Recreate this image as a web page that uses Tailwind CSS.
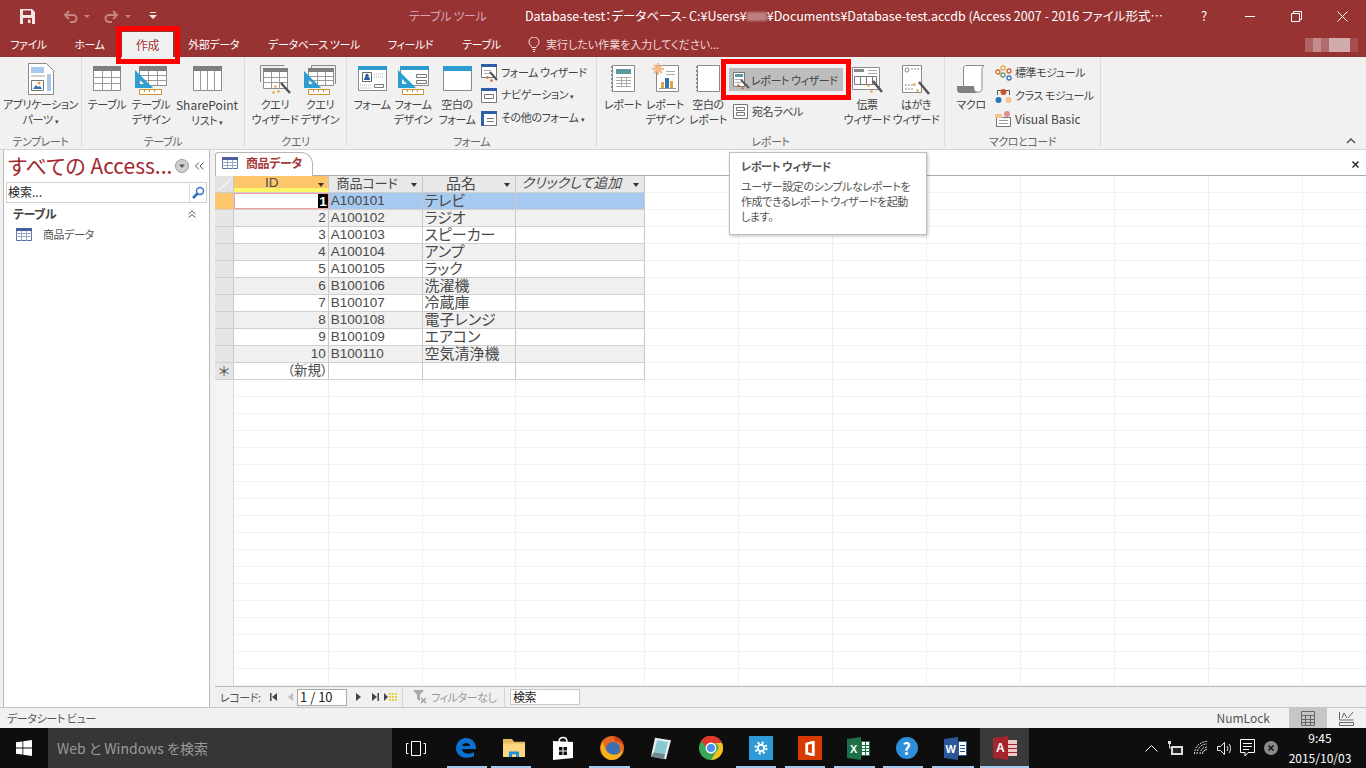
<!DOCTYPE html>
<html lang="ja">
  <head>
    <meta charset="UTF-8" />
    <title>Database-test</title>
    <script src="https://cdn.jsdelivr.net/npm/@tailwindcss/browser@4"></script>
  </head>
  <body class="relative w-[1366px] h-[768px] overflow-hidden bg-[#f1f1f1] text-[11px] tracking-[-0.4px] text-[#444] [font-feature-settings:'palt'] font-['Noto_Sans_CJK_JP','Noto_Sans',sans-serif]">

    <!-- Title bar -->
    <div class="flex items-center h-[32px] bg-[#983334] text-white">
      <div class="flex items-center w-[409px] pl-[20px]">
        <svg width="15" height="15" viewBox="0 0 15 15"><path fill="#f4e6e6" d="M0 0h12l3 3v12H0z"/><path fill="#983334" d="M3 1.500h8v4.500H3zM3 9h9v6H3z"/><path fill="#f4e6e6" d="M8 10.500h2.500V14H8z"/></svg>
        <svg class="ml-[28px]" width="15" height="13" viewBox="0 0 15 13" fill="none" stroke="#c88383" stroke-width="2"><path d="M6 1 2 5l4 4M2 5h8a3.500 3.500 0 0 1 0 7H7"/></svg>
        <span class="ml-[6px] w-0 h-0 border-x-[3px] border-x-transparent border-t-[3px] border-t-[#c88383]"></span>
        <svg class="ml-[14px]" width="15" height="13" viewBox="0 0 15 13" fill="none" stroke="#c88383" stroke-width="2"><path d="m9 1 4 4-4 4M13 5H5a3.500 3.500 0 0 0 0 7h3"/></svg>
        <span class="ml-[6px] w-0 h-0 border-x-[3px] border-x-transparent border-t-[3px] border-t-[#c88383]"></span>
        <svg class="ml-[18px]" width="8" height="8" viewBox="0 0 8 8" fill="#f4e6e6"><path d="M1 0h6v1H1zM0 3h8L4 7z"/></svg>
      </div>
      <div class="w-[116px] text-[#d8a3b8] text-[12px]">テーブル ツール</div>
      <div class="flex items-center w-[666px] whitespace-nowrap text-[12.5px] tracking-normal">Database-test：データベース- C:¥Users¥<span class="inline-block w-[20px] h-[9px] bg-[#bd7f7f] blur-[1px]"></span>¥Documents¥Database-test.accdb (Access 2007 - 2016 ファイル形式…</div>
      <div class="w-[26px] text-center text-[13px]">?</div>
      <div class="flex items-center justify-center w-[46px] ml-[10px]"><span class="w-[10px] h-px bg-white"></span></div>
      <div class="flex items-center justify-center w-[46px]">
        <svg width="11" height="11" viewBox="0 0 11 11" fill="none" stroke="#fff"><path d="M.5 2.500h8v8h-8zM2.500 2.500v-2h8v8h-2"/></svg>
      </div>
      <div class="flex items-center justify-center w-[46px]">
        <svg width="11" height="11" viewBox="0 0 11 11" stroke="#fff"><path d="m.5.500 10 10M10.500.500l-10 10"/></svg>
      </div>
    </div>

    <!-- Ribbon tabs -->
    <div class="flex items-center h-[25px] bg-[#983334] text-white">
      <div class="w-[57px] text-center">ファイル</div>
      <div class="w-[65px] text-center">ホーム</div>
      <div class="flex items-center justify-center w-[51px] h-[25px] bg-[#f1f1f1] text-[#a4373a] text-[12px]">作成</div>
      <div class="w-[81px] text-center">外部データ</div>
      <div class="w-[120px] text-center">データベース ツール</div>
      <div class="w-[73px] text-center">フィールド</div>
      <div class="w-[69px] text-center">テーブル</div>
      <div class="flex items-center ml-[12px] text-[#f0dcdc] tracking-normal">
        <svg width="12" height="15" viewBox="0 0 12 15" fill="none" stroke="#f4e6e6"><path d="M4 10.500C3.500 8.500 1 8 1 5a5 5 0 0 1 10 0c0 3-2.500 3.500-3 5.500zM4.500 12.500h3M5 14.500h2"/></svg>
        <span class="ml-[6px]">実行したい作業を入力してください...</span>
      </div>
      <div class="flex ml-auto mr-[8px] h-[14px] w-[53px]">
        <span class="w-[8px] bg-[#b16465]"></span><span class="w-[8px] bg-[#c28c8c]"></span><span class="w-[8px] bg-[#b36a6b]"></span><span class="w-[21px] bg-[#d2acac]"></span><span class="w-[8px] bg-[#a84c4d]"></span>
      </div>
    </div>

    <!-- Ribbon -->
    <div class="relative flex h-[93px] bg-[#f1f1f1] border-b border-[#d4d4d4] leading-[15px]">

      <!-- テンプレート -->
      <div class="flex flex-col shrink-0 w-[82px] pt-[6px] border-r border-[#dcdcdc] mb-[3px]">
        <div class="flex flex-1 min-h-0">
          <div class="flex flex-col items-center shrink-0 w-[81px]">
            <div class="flex justify-center h-[34px]"><svg width="26" height="32" viewBox="0 0 26 32"><path fill="#fff" stroke="#8a8a8a" d="M.5.500h18l7 7v24H.5z"/><path fill="#a9c9ec" d="M3 4h13v6H3zM19 11h4v17h-4z"/><path fill="#cfcfcf" d="M3 12h14v2H3z"/><path fill="#fff" stroke="#777" d="M3.500 17.500h12v10h-12z"/><path fill="#2e75b6" d="m5 26 3-4 2 2 2-1 2 3z"/><circle cx="11" cy="20" r="1.500" fill="#e9a23b"/></svg></div>
            <div class="text-center whitespace-nowrap">アプリケーション<br />パーツ <span class="text-[7px] align-middle">▾</span></div>
          </div>
        </div>
        <div class="text-center h-[10px] leading-[10px] text-[#666]">テンプレート</div>
      </div>

      <!-- テーブル -->
      <div class="flex flex-col shrink-0 w-[163px] pt-[6px] border-r border-[#dcdcdc] mb-[3px]">
        <div class="flex flex-1 min-h-0 pl-[3px]">
          <div class="flex flex-col items-center shrink-0 w-[44px]">
            <div class="flex justify-center h-[34px] pt-[3px]"><svg width="28" height="25" viewBox="0 0 28 25"><path fill="#fff" stroke="#8a8a8a" d="M.5.500h27v24H.5z"/><path fill="#7f7f7f" d="M0 0h28v5H0z"/><path stroke="#9a9a9a" d="M0 11.500h28M0 17.500h28M9.500 5v20M18.500 5v20"/></svg></div>
            <div class="text-center whitespace-nowrap">テーブル</div>
          </div>
          <div class="flex flex-col items-center shrink-0 w-[44px]">
            <div class="flex justify-center h-[34px] pt-[3px]"><svg width="32" height="29" viewBox="0 0 32 29"><path fill="#fff" stroke="#8a8a8a" d="M4.500.500h27v19h-27z"/><path fill="#7f7f7f" d="M4 0h28v5H4z"/><path stroke="#9a9a9a" d="M4 9.500h28M4 14.500h28M13.500 5v15M22.500 5v15"/><path fill="#2a9fd6" d="M0 4v18h18zM4 13v5h5z" fill-rule="evenodd"/><path fill="#fff" stroke="#c9952e" d="M4.500 23.500h22v5h-22z"/><path stroke="#c9952e" d="M9.500 24v2M14.500 24v2M19.500 24v2"/></svg></div>
            <div class="text-center whitespace-nowrap">テーブル<br />デザイン</div>
          </div>
          <div class="flex flex-col items-center shrink-0 w-[68px]">
            <div class="flex justify-center h-[34px] pt-[3px]"><svg width="29" height="25" viewBox="0 0 29 25"><path fill="#fff" stroke="#8a8a8a" d="M.5.500h28v24H.5z"/><path fill="#7f7f7f" d="M0 0h29v5H0z"/><path stroke="#9a9a9a" d="M7.500 5v20M14.500 5v20M21.500 5v20"/></svg></div>
            <div class="text-center whitespace-nowrap"><span class="text-[12px] tracking-normal">SharePoint</span><br />リスト <span class="text-[7px] align-middle">▾</span></div>
          </div>
        </div>
        <div class="text-center h-[10px] leading-[10px] text-[#666]">テーブル</div>
      </div>

      <!-- クエリ -->
      <div class="flex flex-col shrink-0 w-[102px] pt-[6px] border-r border-[#dcdcdc] mb-[3px]">
        <div class="flex flex-1 min-h-0 pl-[3px]">
          <div class="flex flex-col items-center shrink-0 w-[54px]">
            <div class="flex justify-center h-[34px] pt-[2px]"><svg width="31" height="30" viewBox="0 0 31 30"><path fill="none" stroke="#8a8a8a" d="M.5 17V.500h24"/><path fill="#fff" stroke="#8a8a8a" d="M3.500 3.500h24v20h-24z"/><path fill="#7f7f7f" d="M3 3h25v4H3z"/><path stroke="#9a9a9a" d="M3 12.500h25M3 17.500h25M11.500 7v17M19.500 7v17"/><path stroke="#555" stroke-width="2.500" d="m21 18 9 10"/><path fill="#e0a83a" d="m15 20 2 1-1 2-2-1zM18 25l2 1-1 2-2-1zM13 26l2 1-1 2-2-1z"/></svg></div>
            <div class="text-center whitespace-nowrap">クエリ<br />ウィザード</div>
          </div>
          <div class="flex flex-col items-center shrink-0 w-[36px]">
            <div class="flex justify-center h-[34px] pt-[2px]"><svg class="shrink-0" width="32" height="30" viewBox="0 0 32 30"><path fill="none" stroke="#8a8a8a" d="M7.500 3V.500h24V19"/><path fill="#fff" stroke="#8a8a8a" d="M4.500 3.500h25v17h-25z"/><path fill="#7f7f7f" d="M4 3h26v4H4z"/><path stroke="#9a9a9a" d="M4 11.500h26M4 15.500h26M13.500 7v13M21.500 7v13"/><path fill="#2a9fd6" d="M0 6v17h17zM4 14v5h5z" fill-rule="evenodd"/><path fill="#fff" stroke="#c9952e" d="M4.500 24.500h21v5h-21z"/><path stroke="#c9952e" d="M9.500 25v2M14.500 25v2M19.500 25v2"/></svg></div>
            <div class="text-center whitespace-nowrap">クエリ<br />デザイン</div>
          </div>
        </div>
        <div class="text-center h-[10px] leading-[10px] text-[#666]">クエリ</div>
      </div>

      <!-- フォーム -->
      <div class="flex flex-col shrink-0 w-[250px] pt-[6px] border-r border-[#dcdcdc] mb-[3px]">
        <div class="flex flex-1 min-h-0 pl-[7px]">
          <div class="flex flex-col items-center shrink-0 w-[36px]">
            <div class="flex justify-center h-[34px] pt-[3px]"><svg class="shrink-0" width="29" height="25" viewBox="0 0 29 25"><path fill="#fff" stroke="#8a8a8a" d="M.5.500h28v24H.5z"/><path fill="#2e9bcf" d="M0 0h29v4H0z"/><path fill="#fff" stroke="#666" d="M4.500 6.500h9v9h-9z"/><circle cx="9" cy="9.500" r="1.800" fill="#2e5fa8"/><path fill="#2e5fa8" d="M6 14c0-5 6-5 6 0z"/><path stroke="#aaa" stroke-dasharray="1 1" d="M16 8h10M16 11h10M2 19h12M2 22h12"/><path fill="#fff" stroke="#777" d="M16.500 18.500h9v3h-9z"/></svg></div>
            <div class="text-center whitespace-nowrap">フォーム</div>
          </div>
          <div class="flex flex-col items-center shrink-0 w-[46px]">
            <div class="flex justify-center h-[34px] pt-[3px]"><svg class="shrink-0" width="31" height="29" viewBox="0 0 31 29"><path fill="#fff" stroke="#8a8a8a" d="M2.500.500h28v19h-28z"/><path fill="#2e9bcf" d="M2 0h29v4H2z"/><path fill="#fff" stroke="#777" d="M18.500 8.500h10v3h-10zM18.500 14.500h10v3h-10z"/><path fill="#2a9fd6" d="M0 4v18h18zM4 13v5h5z" fill-rule="evenodd"/><path fill="#fff" stroke="#c9952e" d="M4.500 23.500h21v5h-21z"/><path stroke="#c9952e" d="M9.500 24v2M14.500 24v2M19.500 24v2"/></svg></div>
            <div class="text-center whitespace-nowrap">フォーム<br />デザイン</div>
          </div>
          <div class="flex flex-col items-center shrink-0 w-[42px]">
            <div class="flex justify-center h-[34px] pt-[3px]"><svg class="shrink-0" width="29" height="25" viewBox="0 0 29 25"><path fill="#fff" stroke="#8a8a8a" d="M.5.500h28v24H.5z"/><path fill="#2e9bcf" d="M0 0h29v5H0z"/></svg></div>
            <div class="text-center whitespace-nowrap">空白の<br />フォーム</div>
          </div>
          <div class="flex flex-col pl-[3px]">
            <div class="flex items-center h-[23px] -mt-[2px]">
              <svg class="shrink-0" width="18" height="18" viewBox="0 0 18 18"><path fill="#fff" stroke="#777" d="M.5.500h15v13H.5z"/><path fill="#2e5fa8" d="M0 0h16v3H0z"/><path stroke="#aaa" d="M3 6.500h7M3 9.500h7"/><path stroke="#555" stroke-width="2" d="m9 8 7 8"/><path fill="#d9602b" d="m6 12 2 1-1 2-2-1zM10 15l2 1-1 2-2-1z"/></svg>
              <span class="ml-[2px] whitespace-nowrap">フォーム ウィザード</span>
            </div>
            <div class="flex items-center h-[23px]">
              <svg class="shrink-0" width="16" height="15" viewBox="0 0 16 15"><path fill="#fff" stroke="#777" d="M.5.500h15v14H.5z"/><path fill="#2e5fa8" d="M0 0h16v3H0z"/><path fill="none" stroke="#777" d="M3.500 6.500h9v4h-9z"/></svg>
              <span class="ml-[4px] whitespace-nowrap">ナビゲーション <span class="text-[7px] align-middle">▾</span></span>
            </div>
            <div class="flex items-center h-[23px]">
              <svg class="shrink-0" width="16" height="15" viewBox="0 0 16 15"><path fill="#fff" stroke="#777" d="M.5.500h15v14H.5z"/><path fill="#2e5fa8" d="M0 0h16v3H0zM0 3h3v12H0z"/><path stroke="#777" d="M6 7.500h7M6 10.500h7"/></svg>
              <span class="ml-[4px] whitespace-nowrap">その他のフォーム <span class="text-[7px] align-middle">▾</span></span>
            </div>
          </div>
        </div>
        <div class="text-center h-[10px] leading-[10px] text-[#666]">フォーム</div>
      </div>

      <!-- レポート -->
      <div class="flex flex-col shrink-0 w-[348px] pt-[6px] border-r border-[#dcdcdc] mb-[3px]">
        <div class="flex flex-1 min-h-0 pl-[7px]">
          <div class="flex flex-col items-center shrink-0 w-[38px]">
            <div class="flex justify-center h-[34px] pt-[2px]"><svg width="24" height="27" viewBox="0 0 24 27"><path fill="#fff" stroke="#8a8a8a" d="M1.500.500h22v26h-22z"/><path stroke="#8a8a8a" stroke-dasharray="2 2" d="M.5 1v25"/><path fill="#5f9a9a" d="M5 4h15v5H5z"/><path stroke="#aaa" d="M5 12.500h15M5 15.500h15M5 18.500h15M5 21.500h15M10.500 12v10M15.500 12v10"/></svg></div>
            <div class="text-center whitespace-nowrap">レポート</div>
          </div>
          <div class="flex flex-col items-center shrink-0 w-[46px]">
            <div class="flex justify-center h-[34px]"><svg width="28" height="29" viewBox="0 0 28 29"><path fill="#fff" stroke="#8a8a8a" d="M5.500 2.500h22v26h-22z"/><path stroke="#f3b989" stroke-width="2" d="M7 0v12M1 6h12M3 2l8 8M11 2l-8 8"/><path stroke="#aaa" d="M15 8.500h9M15 11.500h9"/><path fill="#e9a23b" d="M10 19h3v6h-3zM19 18h3v7h-3z"/><path fill="#2e75b6" d="M14 15h4v10h-4z"/><path stroke="#999" d="M8 25.500h17"/></svg></div>
            <div class="text-center whitespace-nowrap">レポート<br />デザイン</div>
          </div>
          <div class="flex flex-col items-center shrink-0 w-[40px]">
            <div class="flex justify-center h-[34px] pt-[2px]"><svg width="24" height="27" viewBox="0 0 24 27"><path fill="#fff" stroke="#8a8a8a" d="M1.500.500h22v26h-22z"/><path stroke="#8a8a8a" stroke-dasharray="2 2" d="M.5 1v25"/></svg></div>
            <div class="text-center whitespace-nowrap">空白の<br />レポート</div>
          </div>
          <div class="flex flex-col shrink-0 w-[114px]">
            <div class="flex items-center w-[114px] h-[23px] ml-[1px] mt-[5px] pt-[2px] pl-[4px] bg-[#bdbdbd]">
              <svg class="shrink-0" width="17" height="17" viewBox="0 0 17 17"><path fill="#fff" stroke="#777" d="M.5.500h11v14H.5z"/><path fill="#5f9a9a" d="M2 2h8v3H2z"/><path stroke="#aaa" d="M2 7.500h8M2 10.500h6"/><path stroke="#555" stroke-width="2" d="m8 8 8 8"/><path fill="#d9602b" d="m5 12 2 1-1 2-2-1zM9 15l2 1-1 2-2-1z"/></svg>
              <span class="ml-[1px] whitespace-nowrap">レポート ウィザード</span>
            </div>
            <div class="flex items-center h-[23px] pl-[5px] mt-[9px]">
              <svg class="shrink-0" width="15" height="15" viewBox="0 0 15 15" fill="#fff" stroke="#777"><path d="M.5.500h14v14H.5z"/><path d="M3.500 3.500h8v3h-8zM3.500 8.500h8v3h-8z"/></svg>
              <span class="ml-[4px] whitespace-nowrap">宛名ラベル</span>
            </div>
          </div>
          <div class="flex flex-col items-center shrink-0 w-[50px]">
            <div class="flex justify-center h-[34px] pt-[4px]"><svg class="shrink-0" width="31" height="27" viewBox="0 0 31 27"><path fill="#fff" stroke="#8a8a8a" d="M.5.500h27v22H.5z"/><path fill="#888" d="M2 2h10v3H2z"/><path stroke="#aaa" d="M16 3.500h9M16 6.500h9"/><path fill="none" stroke="#777" d="M2.500 9.500h22v8h-22zM8.500 9.500v8M14.500 9.500v8M20.500 9.500v8"/><path stroke="#555" stroke-width="2.500" d="m21 14 9 11"/><path fill="#e0a83a" d="m16 17 2 1-1 2-2-1zM19 23l2 1-1 2-2-1z"/></svg></div>
            <div class="text-center whitespace-nowrap">伝票<br />ウィザード</div>
          </div>
          <div class="flex flex-col items-center shrink-0 w-[48px]">
            <div class="flex justify-center h-[34px] pt-[2px]"><svg width="28" height="30" viewBox="0 0 28 30"><path fill="#fff" stroke="#8a8a8a" d="M.5.500h19v27H.5z"/><circle cx="5" cy="5" r="2" fill="none" stroke="#888"/><path stroke="#888" stroke-dasharray="2 1" d="M9 4h8M3 20h8M3 24h8"/><path stroke="#555" stroke-width="2.500" d="m17 17 10 12"/><path fill="#e0a83a" d="m12 18 2 1-1 2-2-1zM15 24l2 1-1 2-2-1z"/></svg></div>
            <div class="text-center whitespace-nowrap">はがき<br />ウィザード</div>
          </div>
        </div>
        <div class="text-center h-[10px] leading-[10px] text-[#666]">レポート</div>
      </div>

      <!-- マクロとコード -->
      <div class="flex flex-col shrink-0 w-[156px] pt-[6px] border-r border-[#dcdcdc] mb-[3px]">
        <div class="flex flex-1 min-h-0 pl-[5px]">
          <div class="flex flex-col items-center shrink-0 w-[42px]">
            <div class="flex justify-center h-[34px] pt-[2px]"><svg width="28" height="28" viewBox="0 0 28 28"><path fill="#fff" stroke="#8a8a8a" d="M6.500 3C6.500 1 8 .500 10 .500h17c-2 1-2 3-2 5v18c0 2-1 3.500-3 3.500H6.500z"/><path fill="#7f7f7f" d="M0 21h17c0 3 1 6 3 7H3c-2 0-3-2-3-4z"/></svg></div>
            <div class="text-center whitespace-nowrap">マクロ</div>
          </div>
          <div class="flex flex-col pl-[3px]">
            <div class="flex items-center h-[23px] -mt-[2px] whitespace-nowrap">
              <svg class="shrink-0" width="17" height="16" viewBox="0 0 17 16" fill="#fff" stroke-width="1.300"><circle cx="3" cy="7" r="2" stroke="#d9602b"/><circle cx="8" cy="3" r="2" stroke="#e0a83a"/><circle cx="14" cy="6" r="2" stroke="#d9602b"/><circle cx="8" cy="10" r="2" stroke="#5f9a6a"/><circle cx="14" cy="13" r="2" stroke="#2e75b6"/></svg>
              <span class="ml-[3px]">標準モジュール</span>
            </div>
            <div class="flex items-center h-[23px] whitespace-nowrap">
              <svg class="shrink-0" width="17" height="16" viewBox="0 0 17 16"><path fill="none" stroke="#555" d="M2.500 7V2.500h12V7"/><circle cx="8.500" cy="4" r="3" fill="#c9562b"/><circle cx="3.500" cy="12" r="3" fill="#2e75b6"/><circle cx="13.500" cy="12" r="3" fill="#f2c48f"/></svg>
              <span class="ml-[3px]">クラス モジュール</span>
            </div>
            <div class="flex items-center h-[23px] whitespace-nowrap">
              <svg class="shrink-0" width="17" height="16" viewBox="0 0 17 16"><path fill="#fff" stroke="#777" d="M1.500 6.500h14v9h-14z"/><path stroke="#999" d="M4 9.500h9M4 12.500h9"/><path fill="#f2c48f" d="M0 3h7v4H0z"/><circle cx="12" cy="3" r="3" fill="#e58c8c"/></svg>
              <span class="ml-[3px] text-[12px] tracking-normal">Visual Basic</span>
            </div>
          </div>
        </div>
        <div class="text-center h-[10px] leading-[10px] text-[#666]">マクロとコード</div>
      </div>

      <div class="flex flex-1 items-end justify-end pb-[5px] pr-[10px]">
        <svg width="10" height="6" viewBox="0 0 10 6" fill="none" stroke="#555" stroke-width="1.500"><path d="m1 5 4-4 4 4"/></svg>
      </div>
    </div>

    <!-- Main -->
    <div class="flex h-[557px] bg-[#f1f1f1]">

      <!-- Navigation pane -->
      <div class="flex flex-col w-[207px] ml-[3px] bg-white border-x border-[#b9b9b9]">
        <div class="flex items-center h-[32px] pl-[4px]">
          <span class="w-[165px] text-[21px] tracking-normal text-[#a4262c] whitespace-nowrap">すべての Access...</span>
          <svg class="ml-[2px]" width="14" height="14" viewBox="0 0 14 14"><circle cx="7" cy="7" r="6.500" fill="#d0d0d0" stroke="#999"/><path fill="#555" d="M4 5.500h6L7 9z"/></svg>
          <svg class="ml-[6px]" width="9" height="8" viewBox="0 0 9 8" fill="none" stroke="#555"><path d="M4 .500.500 4 4 7.500M8.500.500 5 4l3.500 3.500"/></svg>
        </div>
        <div class="flex items-center h-[21px] mx-[2px] border border-[#cfcfcf]">
          <span class="flex-1 pl-[1px] pb-[2px] text-[12px] tracking-normal text-[#222]">検索...</span>
          <span class="flex items-center justify-center w-[17px] h-full border-l border-[#dcdcdc]">
            <svg width="13" height="13" viewBox="0 0 13 13" fill="none" stroke="#2e6fc2"><circle cx="8" cy="5" r="3.500" stroke-width="1.500"/><path stroke-width="2.500" d="M5.500 7.500 1 12"/></svg>
          </span>
        </div>
        <div class="flex items-center justify-between h-[22px] pl-[9px] pr-[13px] text-[12px] font-bold text-[#444]">
          <span>テーブル</span>
          <svg width="8" height="8" viewBox="0 0 8 8" fill="none" stroke="#555"><path d="m.5 4 3.500-3 3.500 3M.5 7.500 4 4.500l3.500 3"/></svg>
        </div>
        <div class="flex items-center h-[19px] pl-[12px]">
          <svg width="16" height="13" viewBox="0 0 16 13"><path fill="#fff" stroke="#5a6ea8" d="M.5.500h15v12H.5z"/><path fill="#4a5f9e" d="M0 0h16v3H0z"/><path stroke="#9aa8cc" d="M0 5.500h16M0 8.500h16M5.500 3v10M10.500 3v10"/></svg>
          <span class="ml-[11px] text-[#555]">商品データ</span>
        </div>
      </div>

      <!-- Document -->
      <div class="flex flex-col flex-1 min-w-0 ml-[5px] bg-white">
        <!-- Tab strip -->
        <div class="flex items-end justify-between h-[26px] border-b border-[#adadad] bg-white">
          <div class="relative flex items-center w-[98px] h-[24px] -mb-px pl-[6px] pb-[3px] bg-white border border-b-0 border-[#b5b5b5] rounded-tl-[3px] rounded-tr-[12px]">
            <svg width="16" height="12" viewBox="0 0 16 12"><path fill="#fff" stroke="#5a6ea8" d="M.5.500h15v11H.5z"/><path fill="#4a5f9e" d="M0 0h16v3H0z"/><path stroke="#9aa8cc" d="M0 5.500h16M0 8.500h16M5.500 3v9M10.500 3v9"/></svg>
            <span class="ml-[8px] font-bold text-[12px] text-[#a4373a] whitespace-nowrap">商品データ</span>
          </div>
          <svg class="mb-[7px] mr-[7px]" width="7" height="7" viewBox="0 0 7 7" stroke="#222" stroke-width="1.400"><path d="m.5.500 6 6M6.500.500l-6 6"/></svg>
        </div>

        <!-- Datasheet -->
        <div class="flex flex-1 min-h-0 text-[13.5px] tracking-normal text-[#4a4a4a] leading-[15px] font-['Liberation_Sans','Noto_Sans_CJK_JP',sans-serif]">
          <div class="flex flex-col w-[430px]">
            <!-- Header -->
            <div class="flex h-[17px] bg-[#e8e8e8] border-b border-[#cfcfcf]">
              <div class="flex items-end justify-end w-[19px] pr-[1px] pb-[1px] bg-[#e3e3e3] border-r border-[#c8c8c8]">
                <svg width="14" height="13" viewBox="0 0 14 13"><path stroke="#fff" d="M1 12 13 1"/></svg>
              </div>
              <div class="relative flex items-center justify-center w-[95px] pr-[18px] bg-[#fdc66b] border-r border-[#c8c8c8] border-b-[4px] border-b-[#fbf768]">
                ID
                <span class="absolute right-[4px] top-[7px] w-0 h-0 border-x-[3.500px] border-x-transparent border-t-[4px] border-t-[#333]"></span>
              </div>
              <div class="relative flex items-center justify-center w-[94px] pr-[16px] pb-[1px] text-[13px] border-r border-[#c8c8c8]">
                商品コード
                <span class="absolute right-[5px] top-[7px] w-0 h-0 border-x-[3.500px] border-x-transparent border-t-[4px] border-t-[#333]"></span>
              </div>
              <div class="relative flex items-center justify-center w-[94px] pr-[16px] pb-[1px] text-[15px] border-r border-[#c8c8c8]">
                品名
                <span class="absolute right-[5px] top-[7px] w-0 h-0 border-x-[3.500px] border-x-transparent border-t-[4px] border-t-[#333]"></span>
              </div>
              <div class="relative flex items-center w-[129px] pl-[5px] pb-[1px] text-[14px] italic border-r border-[#c8c8c8] whitespace-nowrap">
                クリックして追加
                <span class="absolute right-[5px] top-[7px] w-0 h-0 border-x-[3.500px] border-x-transparent border-t-[4px] border-t-[#333]"></span>
              </div>
            </div>

            <!-- Rows -->
            <div class="flex h-[17px] bg-white border-b border-[#cfcfcf]">
              <div class="w-[19px] bg-[#fdc66b] border-r border-[#c8c8c8]"></div>
              <div class="flex justify-end w-[95px] bg-white border border-[#fb9c9c]"><span class="bg-black text-white font-bold px-px">1</span></div>
              <div class="w-[94px] pl-[2px] bg-[#a6c9f0] border-r border-[#c8c8c8]">A100101</div>
              <div class="w-[94px] pl-[2px] bg-[#a6c9f0] border-r border-[#c8c8c8] text-[15px]">テレビ</div>
              <div class="w-[129px] bg-[#a6c9f0] border-r border-[#c8c8c8]"></div>
            </div>
            <div class="flex h-[17px] bg-[#f0f0f0] border-b border-[#cfcfcf]">
              <div class="w-[19px] bg-[#e6e6e6] border-r border-[#c8c8c8]"></div>
              <div class="w-[95px] pr-[2px] text-right border-r border-[#c8c8c8]">2</div>
              <div class="w-[94px] pl-[2px] border-r border-[#c8c8c8]">A100102</div>
              <div class="w-[94px] pl-[2px] border-r border-[#c8c8c8] text-[15px]">ラジオ</div>
              <div class="w-[129px] border-r border-[#c8c8c8]"></div>
            </div>
            <div class="flex h-[17px] bg-white border-b border-[#cfcfcf]">
              <div class="w-[19px] bg-[#e6e6e6] border-r border-[#c8c8c8]"></div>
              <div class="w-[95px] pr-[2px] text-right border-r border-[#c8c8c8]">3</div>
              <div class="w-[94px] pl-[2px] border-r border-[#c8c8c8]">A100103</div>
              <div class="w-[94px] pl-[2px] border-r border-[#c8c8c8] text-[15px]">スピーカー</div>
              <div class="w-[129px] border-r border-[#c8c8c8]"></div>
            </div>
            <div class="flex h-[17px] bg-[#f0f0f0] border-b border-[#cfcfcf]">
              <div class="w-[19px] bg-[#e6e6e6] border-r border-[#c8c8c8]"></div>
              <div class="w-[95px] pr-[2px] text-right border-r border-[#c8c8c8]">4</div>
              <div class="w-[94px] pl-[2px] border-r border-[#c8c8c8]">A100104</div>
              <div class="w-[94px] pl-[2px] border-r border-[#c8c8c8] text-[15px]">アンプ</div>
              <div class="w-[129px] border-r border-[#c8c8c8]"></div>
            </div>
            <div class="flex h-[17px] bg-white border-b border-[#cfcfcf]">
              <div class="w-[19px] bg-[#e6e6e6] border-r border-[#c8c8c8]"></div>
              <div class="w-[95px] pr-[2px] text-right border-r border-[#c8c8c8]">5</div>
              <div class="w-[94px] pl-[2px] border-r border-[#c8c8c8]">A100105</div>
              <div class="w-[94px] pl-[2px] border-r border-[#c8c8c8] text-[15px]">ラック</div>
              <div class="w-[129px] border-r border-[#c8c8c8]"></div>
            </div>
            <div class="flex h-[17px] bg-[#f0f0f0] border-b border-[#cfcfcf]">
              <div class="w-[19px] bg-[#e6e6e6] border-r border-[#c8c8c8]"></div>
              <div class="w-[95px] pr-[2px] text-right border-r border-[#c8c8c8]">6</div>
              <div class="w-[94px] pl-[2px] border-r border-[#c8c8c8]">B100106</div>
              <div class="w-[94px] pl-[2px] border-r border-[#c8c8c8] text-[15px]">洗濯機</div>
              <div class="w-[129px] border-r border-[#c8c8c8]"></div>
            </div>
            <div class="flex h-[17px] bg-white border-b border-[#cfcfcf]">
              <div class="w-[19px] bg-[#e6e6e6] border-r border-[#c8c8c8]"></div>
              <div class="w-[95px] pr-[2px] text-right border-r border-[#c8c8c8]">7</div>
              <div class="w-[94px] pl-[2px] border-r border-[#c8c8c8]">B100107</div>
              <div class="w-[94px] pl-[2px] border-r border-[#c8c8c8] text-[15px]">冷蔵庫</div>
              <div class="w-[129px] border-r border-[#c8c8c8]"></div>
            </div>
            <div class="flex h-[17px] bg-[#f0f0f0] border-b border-[#cfcfcf]">
              <div class="w-[19px] bg-[#e6e6e6] border-r border-[#c8c8c8]"></div>
              <div class="w-[95px] pr-[2px] text-right border-r border-[#c8c8c8]">8</div>
              <div class="w-[94px] pl-[2px] border-r border-[#c8c8c8]">B100108</div>
              <div class="w-[94px] pl-[2px] border-r border-[#c8c8c8] text-[15px]">電子レンジ</div>
              <div class="w-[129px] border-r border-[#c8c8c8]"></div>
            </div>
            <div class="flex h-[17px] bg-white border-b border-[#cfcfcf]">
              <div class="w-[19px] bg-[#e6e6e6] border-r border-[#c8c8c8]"></div>
              <div class="w-[95px] pr-[2px] text-right border-r border-[#c8c8c8]">9</div>
              <div class="w-[94px] pl-[2px] border-r border-[#c8c8c8]">B100109</div>
              <div class="w-[94px] pl-[2px] border-r border-[#c8c8c8] text-[15px]">エアコン</div>
              <div class="w-[129px] border-r border-[#c8c8c8]"></div>
            </div>
            <div class="flex h-[17px] bg-[#f0f0f0] border-b border-[#cfcfcf]">
              <div class="w-[19px] bg-[#e6e6e6] border-r border-[#c8c8c8]"></div>
              <div class="w-[95px] pr-[2px] text-right border-r border-[#c8c8c8]">10</div>
              <div class="w-[94px] pl-[2px] border-r border-[#c8c8c8]">B100110</div>
              <div class="w-[94px] pl-[2px] border-r border-[#c8c8c8] text-[15px]">空気清浄機</div>
              <div class="w-[129px] border-r border-[#c8c8c8]"></div>
            </div>
            <div class="flex h-[17px] bg-white border-b border-[#cfcfcf]">
              <div class="flex items-center justify-center w-[19px] bg-[#e6e6e6] border-r border-[#c8c8c8]">＊</div>
              <div class="w-[95px] text-right border-r border-[#c8c8c8] whitespace-nowrap">（新規）</div>
              <div class="w-[94px] border-r border-[#c8c8c8]"></div>
              <div class="w-[94px] border-r border-[#c8c8c8]"></div>
              <div class="w-[129px] border-r border-[#c8c8c8]"></div>
            </div>

            <!-- Empty grid under the rows -->
            <div class="flex flex-1 bg-[linear-gradient(to_bottom,transparent_16px,#f2f2f2_16px)] bg-[size:100%_17px]">
              <div class="w-[19px] bg-[#f4f4f4] border-r border-[#dcdcdc]"></div>
              <div class="w-[95px] border-r border-[#f0f0f0]"></div>
              <div class="w-[94px] border-r border-[#f0f0f0]"></div>
              <div class="w-[94px] border-r border-[#f0f0f0]"></div>
              <div class="w-[129px] border-r border-[#f0f0f0]"></div>
            </div>
          </div>
          <div class="flex-1 bg-[linear-gradient(to_bottom,transparent_16px,#f2f2f2_16px),linear-gradient(to_right,transparent_93px,#f0f0f0_93px)] bg-[size:100%_17px,94px_100%]"></div>
        </div>

        <!-- Record navigation -->
        <div class="flex items-center h-[21px] bg-[#f0f0f0] border-t border-[#b9b9b9] whitespace-nowrap text-[#555]">
          <span class="ml-[5px] w-[50px]">レコード:</span>
          <svg width="7" height="8" viewBox="0 0 7 8" fill="#444"><path d="M0 0h1.500v8H0zM7 0v8L2 4z"/></svg>
          <svg class="ml-[11px]" width="5" height="8" viewBox="0 0 5 8" fill="#bbb"><path d="M5 0v8L0 4z"/></svg>
          <span class="flex items-center w-[50px] h-[17px] ml-[4px] pl-[2px] bg-white border border-[#a9a9a9] text-[#222] text-[13px] tracking-normal">1 / 10</span>
          <svg class="ml-[9px]" width="5" height="8" viewBox="0 0 5 8" fill="#444"><path d="M0 0v8l5-4z"/></svg>
          <svg class="ml-[11px]" width="7" height="8" viewBox="0 0 7 8" fill="#444"><path d="M0 0v8l5-4zM5.500 0H7v8H5.500z"/></svg>
          <svg class="ml-[5px]" width="13" height="8" viewBox="0 0 13 8"><path fill="#444" d="M0 0v8l4-4z"/><path fill="#e6d13a" d="M5 0h2v2H5zM8 0h2v2H8zM11 0h2v2h-2zM5 3h2v2H5zM8 3h2v2H8zM11 3h2v2h-2zM5 6h2v2H5zM8 6h2v2H8zM11 6h2v2h-2z"/></svg>
          <span class="ml-[5px] w-px h-[20px] bg-[#d4d4d4]"></span>
          <svg class="ml-[10px]" width="15" height="14" viewBox="0 0 15 14"><path fill="#a9a9a9" d="M0 0h11L7 5v6L4 9V5z"/><path stroke="#999" stroke-width="1.300" d="m8 8 5 5M13 8l-5 5"/></svg>
          <span class="ml-[3px] w-[73px] text-[#9a9a9a]">フィルターなし</span>
          <span class="w-px h-[20px] bg-[#d4d4d4]"></span>
          <span class="flex items-center w-[70px] h-[16px] ml-[5px] pl-[2px] bg-white border border-[#c8c8c8] text-[12px] text-[#222]">検索</span>
        </div>
      </div>
    </div>

    <!-- Status bar -->
    <div class="flex items-center h-[21px] pl-[7px] bg-[#f1f1f1] border-t border-[#c6c6c6] text-[#555]">
      <span>データシート ビュー</span>
      <span class="ml-auto text-[12px] tracking-normal">NumLock</span>
      <div class="flex items-center justify-center w-[38px] h-full ml-[19px] bg-[#c6c6c6]">
        <svg width="14" height="15" viewBox="0 0 14 15" fill="none" stroke="#666"><path d="M.5.500h13v14H.5zM.5 4.500h13M.5 8.500h13M.5 11.500h13M4.500 4.500v10M9.500 4.500v10"/></svg>
      </div>
      <div class="flex items-center justify-center w-[39px] h-full">
        <svg width="15" height="15" viewBox="0 0 15 15" fill="none" stroke="#666"><path d="M.5 1v8h14M3 7l2-5 3 5M9 7l5-6"/><path d="M.5 11.500h14v3H.5z"/></svg>
      </div>
    </div>

    <!-- Taskbar -->
    <div class="flex items-center h-[40px] bg-[#0e0e0e] text-white tracking-normal">
      <div class="flex items-center justify-center w-[48px]">
        <svg width="16" height="16" viewBox="0 0 16 16" fill="#fff"><path d="m0 2.300 6.500-.9v6.200H0zM7.300 1.300 16 0v7.600H7.300zM0 8.400h6.500v6.200L0 13.700zM7.300 8.400H16V16l-8.700-1.200z"/></svg>
      </div>
      <div class="flex items-center w-[344px] h-[40px] pl-[9px] bg-[#363636] text-[#9a9a9a] text-[14px]">Web と Windows を検索</div>

      <div class="flex items-center justify-center w-[48px] h-[40px]">
        <svg width="20" height="15" viewBox="0 0 20 15" fill="none" stroke="#fff"><path d="M5.500.500h9v14h-9zM2.500 2.500H.5v10h2M17.500 2.500h2v10h-2"/></svg>
      </div>
      <div class="relative flex items-center justify-center w-[49px] h-[40px] ml-[1px]">
        <svg width="20" height="20" viewBox="0 0 20 20"><path fill="#0b72d4" d="M10 0c6 0 10 4 10 11H6c0 5 8 6 12 3v4c-5 3-17 3-18-7C0 5 4 0 10 0zM6 8h8c0-4-7-4-8 0z"/></svg>
        <span class="absolute left-[6px] bottom-0 w-[40px] h-[2px] bg-[#a3c9ee]"></span>
      </div>
      <div class="relative flex items-center justify-center w-[48px] h-[40px]">
        <svg width="22" height="18" viewBox="0 0 22 20" preserveAspectRatio="none"><path fill="#e7b960" d="M0 0h9l2 3h11v17H0z"/><path fill="#fbd77f" d="M0 5h22v15H0z"/><path fill="#1d90d8" d="M6 14h10v6h-3v-3H9v3H6z"/></svg>
        <span class="absolute left-[1px] bottom-0 w-[40px] h-[2px] bg-[#a3c9ee]"></span>
      </div>
      <div class="flex items-center justify-center w-[49px] h-[40px]">
        <svg width="20" height="24" viewBox="0 0 20 24"><path fill="none" stroke="#fff" stroke-width="1.500" d="M6 6c0-6 8-6 8 0"/><path fill="#fff" d="m0 5 20 1v16L0 24z"/><path fill="#111" d="M6 11h3.500v3.500H6zM10.500 11H14v3.500h-3.500zM6 15.500h3.500V19H6zM10.500 15.500H14V19h-3.500z"/></svg>
      </div>
      <div class="relative flex items-center justify-center w-[50px] h-[40px]">
        <svg width="24" height="24" viewBox="0 0 24 24"><circle cx="12" cy="12" r="12" fill="#e66a1f"/><circle cx="13" cy="13" r="7" fill="#3d6fb5"/><path fill="#f6b21b" d="M3 6c2 14 14 16 20 8-1 6-6 10-11 10C3 24-2 13 3 6z"/><path fill="#d8391e" d="M14 0c5 1 9 5 10 11-2-4-5-6-9-6z"/></svg>
        <span class="absolute left-[2px] bottom-0 w-[41px] h-[2px] bg-[#a3c9ee]"></span>
      </div>
      <div class="flex items-center justify-center w-[48px] h-[40px]">
        <svg width="22" height="24" viewBox="0 0 22 28" preserveAspectRatio="none"><path fill="#e8eef0" d="m5 2 16 3-5 22L1 24z"/><path fill="#8cc9cf" d="m7 5 11 2-3 14-11-2z"/><path fill="#6d8a8f" d="M4 19l11 2-1 6L1 24z"/></svg>
      </div>
      <div class="flex items-center justify-center w-[51px] h-[40px]">
        <svg width="24" height="24" viewBox="0 0 24 24"><circle cx="12" cy="12" r="12" fill="#3aa757"/><path fill="#e0392b" d="M2 5A12 12 0 0 1 23 7H12a5 5 0 0 0-5 4z"/><path fill="#f6c11a" d="M23 7a12 12 0 0 1-11 17l5-8a5 5 0 0 0-1-9z"/><circle cx="12" cy="12" r="5.500" fill="#fff"/><circle cx="12" cy="12" r="4" fill="#4a8fe8"/></svg>
      </div>
      <div class="relative flex items-center justify-center w-[49px] h-[40px]">
        <div class="flex items-center justify-center w-[24px] h-[24px] bg-[#2f9bd6]">
          <svg width="14" height="14" viewBox="0 0 14 14" fill="none" stroke="#fff"><circle cx="7" cy="7" r="3.200" stroke-width="2"/><circle cx="7" cy="7" r="5.500" stroke-width="2" stroke-dasharray="2.150 2.170"/></svg>
        </div>
        <span class="absolute left-[0px] bottom-0 w-[40px] h-[2px] bg-[#a3c9ee]"></span>
      </div>
      <div class="relative flex items-center justify-center w-[49px] h-[40px]">
        <div class="flex items-center justify-center w-[24px] h-[24px] bg-[#d83b01]">
          <svg width="10" height="15" viewBox="0 0 10 16" fill="#fff"><path d="M0 2 7 0h3v16H7l-7-2zM3 4v8l4 1V3z"/></svg>
        </div>
        <span class="absolute left-[0px] bottom-0 w-[40px] h-[2px] bg-[#a3c9ee]"></span>
      </div>
      <div class="relative flex items-center justify-center w-[48px] h-[40px]">
        <svg width="23" height="23" viewBox="0 0 23 23"><path fill="#1e7145" d="m0 2 14-2v23L0 21z"/><path fill="#fff" stroke="#1e7145" d="M14.500 4.500h8v14h-8z"/><path stroke="#1e7145" d="M14 8.500h8M14 11.500h8M14 14.500h8M18.500 5v13"/><text x="3" y="16" fill="#fff" font-size="11" font-weight="700" font-family="Liberation Sans">X</text></svg>
        <span class="absolute left-[0px] bottom-0 w-[41px] h-[2px] bg-[#a3c9ee]"></span>
      </div>
      <div class="relative flex items-center justify-center w-[49px] h-[40px]">
        <div class="flex items-center justify-center w-[22px] h-[22px] rounded-full bg-[#2c8fd8] text-[16px] font-bold text-white">?</div>
        <span class="absolute left-[1px] bottom-0 w-[40px] h-[2px] bg-[#a3c9ee]"></span>
      </div>
      <div class="relative flex items-center justify-center w-[49px] h-[40px]">
        <svg width="23" height="23" viewBox="0 0 23 23"><path fill="#2b579a" d="m0 2 14-2v23L0 21z"/><path fill="#fff" stroke="#2b579a" d="M14.500 4.500h8v14h-8z"/><path stroke="#2b579a" d="M16 8.500h5M16 11.500h5M16 14.500h5"/><text x="1.500" y="16" fill="#fff" font-size="11" font-weight="700" font-family="Liberation Sans">W</text></svg>
        <span class="absolute left-[1px] bottom-0 w-[42px] h-[2px] bg-[#a3c9ee]"></span>
      </div>
      <div class="relative flex items-center justify-center w-[49px] h-[40px] bg-[#3a3a3a]">
        <svg width="24" height="24" viewBox="0 0 24 24"><path fill="#a4262c" d="m0 2 15-2v24L0 22z"/><path fill="#f0c8c8" d="M15 4h9v16h-9z"/><path stroke="#a4262c" d="M15 8.500h9M15 12.500h9M15 16.500h9"/><text x="3" y="16" fill="#fff" font-size="12" font-weight="700" font-family="Liberation Sans">A</text></svg>
        <span class="absolute left-0 bottom-0 w-full h-[2px] bg-[#a3c9ee]"></span>
      </div>

      <!-- Tray -->
      <div class="flex items-center ml-auto h-[40px]">
        <svg width="13" height="7" viewBox="0 0 13 7" fill="none" stroke="#fff"><path d="m.5 6.500 6-6 6 6"/></svg>
        <svg class="ml-[9px]" width="16" height="15" viewBox="0 0 16 15"><path fill="#ddd" d="M1 0h3v3H1zM4 5h12v9H4z"/><path stroke="#ddd" d="M2.500 3v4H4"/><path fill="#222" d="M6 7h8v5H6z"/></svg>
        <svg class="ml-[11px]" width="14" height="14" viewBox="0 0 14 14" fill="none" stroke="#ddd"><path stroke-dasharray="2 1" d="M.5 13C.5 6 6 .500 13 .500M3 13c0-5.500 4.500-10 10-10M6 13c0-4 3-7 7-7"/><path d="M8.500 13c0-2.500 2-4.500 4.500-4.500"/></svg>
        <svg class="ml-[9px]" width="16" height="15" viewBox="0 0 16 15" fill="none" stroke="#eee"><path d="M.5 5.500h3l4-4v12l-4-4h-3zM10 5c1 1.500 1 3.500 0 5M12 3c2 2.500 2 6.500 0 9"/></svg>
        <svg class="ml-[7px]" width="15" height="18" viewBox="0 0 15 18" fill="none" stroke="#fff"><path d="M.5.500h14v13H8L5 17v-3.500H.5zM3 4.500h9M3 7.500h9M3 10.500h6"/></svg>
        <svg class="ml-[9px]" width="14" height="14" viewBox="0 0 14 14"><circle cx="7" cy="7" r="7" fill="#8a8a8a"/><path stroke="#111" stroke-width="1.500" d="m4.500 4.500 5 5M9.500 4.500l-5 5"/></svg>
        <div class="flex flex-col items-center w-[70px] ml-[7px] text-[12px] leading-[20px]">
          <span>9:45</span>
          <span>2015/10/03</span>
        </div>
        <div class="w-[11px]"></div>
      </div>
    </div>

    <!-- Callout boxes drawn over the screenshot -->
    <div class="absolute left-[116px] top-[26px] w-[64px] h-[38px] border-[5px] border-[#fe0000]"></div>
    <div class="absolute left-[721px] top-[59px] w-[130px] h-[41px] border-[5px] border-[#fe0000]"></div>

    <!-- Tooltip -->
    <div class="absolute left-[729px] top-[152px] w-[198px] h-[83px] px-[11px] pt-[6px] bg-white border border-[#bdbdbd] shadow-[1px_1px_3px_rgba(0,0,0,0.25)] text-[#555] leading-[15px] whitespace-nowrap">
      <div class="font-bold">レポート ウィザード</div>
      <div class="mt-[5px]">ユーザー設定のシンプルなレポートを<br />作成できるレポート ウィザードを起動<br />します。</div>
    </div>
  </body>
</html>
